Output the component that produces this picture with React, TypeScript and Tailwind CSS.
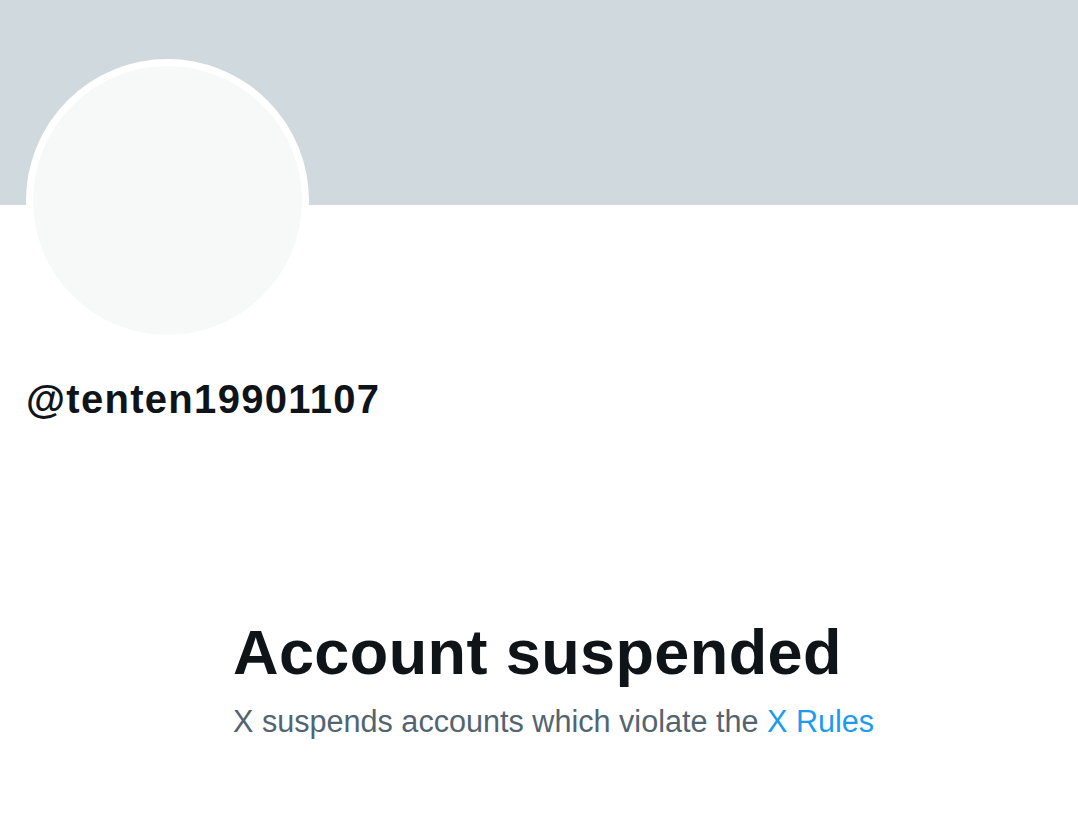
import React from 'react';

export default function App() {
  return (
    <div className="w-[1078px] h-[840px] bg-white overflow-hidden font-['Liberation_Sans',Arial,sans-serif]">
      {/* banner */}
      <div className="h-[205px] bg-[#cfd9de]" />

      <div className="px-[26px]">
        <div className="relative -mt-[146px] w-[283px] h-[283px] rounded-full border-[7px] border-white bg-[#f7f9f9]" />
        <div className="mt-[33px] text-[40px] leading-[48px] font-bold text-[#0f1419] tracking-[1.3px]">
          @tenten19901107
        </div>
      </div>

      <div className="pl-[233px] mt-[198px]">
        <h1 className="text-[63px] leading-[63px] font-bold text-[#0f1419] tracking-[0.4px] whitespace-nowrap">
          Account suspended
        </h1>
        <p className="mt-[17px] text-[30.6px] leading-[40px] text-[#536471] whitespace-nowrap">
          X suspends accounts which violate the{' '}
          <a href="#" className="text-[#1d9bf0]">X Rules</a>
        </p>
      </div>
    </div>
  );
}
